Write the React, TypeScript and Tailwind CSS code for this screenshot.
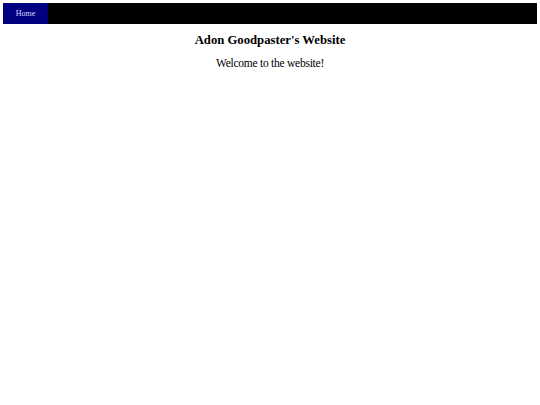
export default function App() {
  return (
    <div className="min-h-[405px] bg-white px-[3px] pt-[3px] font-['Liberation_Serif',serif] text-black">
      <nav className="flex h-[21px] bg-black">
        <a className="flex w-[45px] items-center justify-center bg-[#000080] text-[8px] text-[#d8d8ff]">Home</a>
      </nav>
      <h1 className="mt-[8px] text-center text-[12.7px] font-bold leading-[16px]">Adon Goodpaster's Website</h1>
      <p className="mt-[8px] text-center text-[11.5px] leading-[14px] tracking-[-0.25px]">Welcome to the website!</p>
    </div>
  );
}
